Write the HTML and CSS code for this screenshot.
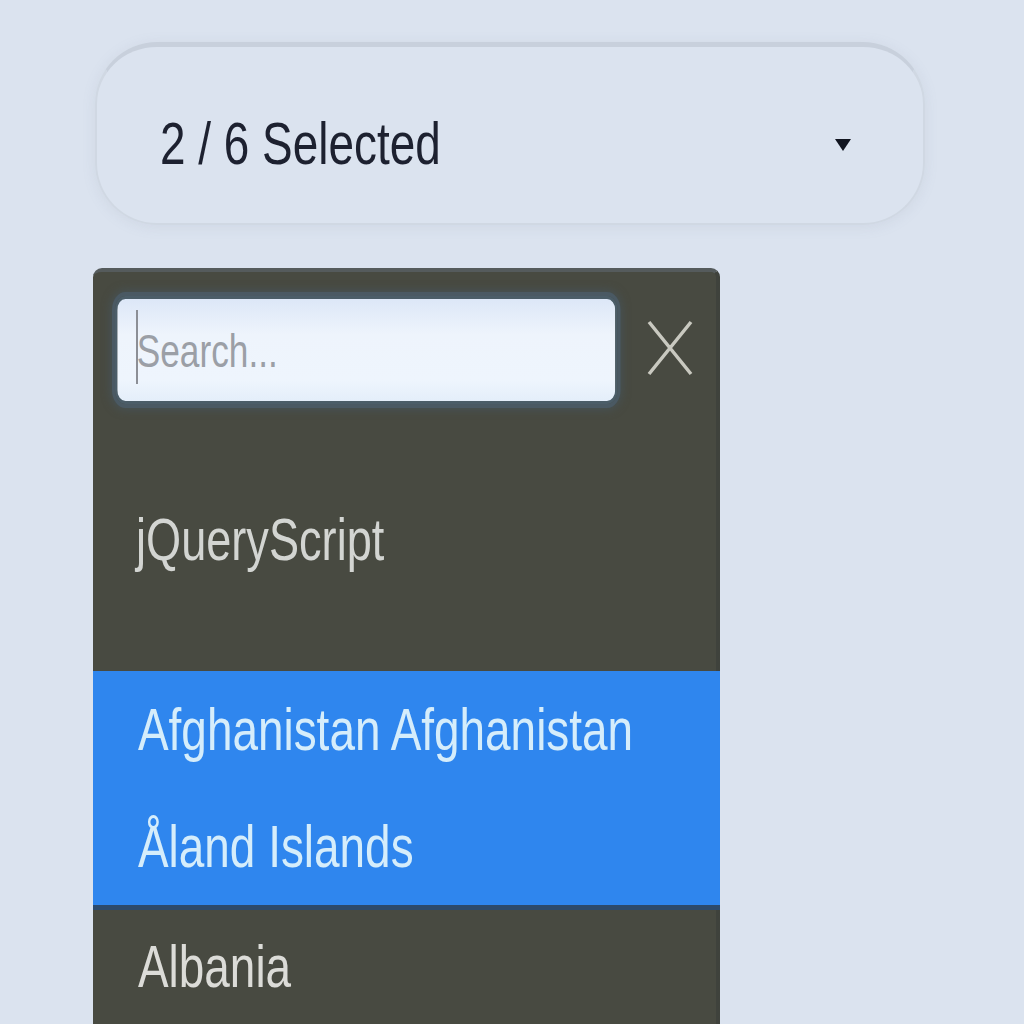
FILE: index.html
```html
<!DOCTYPE html>
<html lang="en">
<head>
<meta charset="utf-8">
<title>Multi Select</title>
<link rel="stylesheet" href="styles.css">
</head>
<body>
<div class="wrap">
  <div class="select">
    <span class="t sel-text">2 / 6 Selected</span>
    <span class="caret"></span>
  </div>
  <div class="panel">
    <div class="search-row">
      <label class="search">
        <input type="text" class="search-input" placeholder="Search...">
        <span class="cursor"></span>
      </label>
      <button class="close" aria-label="Close">
        <svg width="48" height="58" viewBox="0 0 48 58"><path d="M3 3 L45 55 M45 3 L3 55" stroke="#c9c9c0" stroke-width="3.5" fill="none"/></svg>
      </button>
    </div>
    <div class="group"><span class="t">jQueryScript</span></div>
    <div class="selected">
      <div class="option"><span class="t">Afghanistan Afghanistan</span></div>
      <div class="option"><span class="t">Åland Islands</span></div>
    </div>
    <div class="option plain"><span class="t">Albania</span></div>
  </div>
</div>
</body>
</html>
```

FILE: styles.css
```css
* { box-sizing: border-box; }
html, body { margin: 0; padding: 0; }
body {
  background: #dbe3ef;
  font-family: "Liberation Sans", Arial, sans-serif;
  height: 1024px;
  overflow: hidden;
}
.wrap {
  padding: 42px 0 0 95px;
}
.t {
  display: inline-block;
  transform: scaleX(0.765);
  transform-origin: left center;
  white-space: nowrap;
}
.select {
  width: 830px;
  height: 183px;
  border-radius: 62px;
  border: 2px solid #d0d8e3;
  border-top: 5px solid #c8d0dc;
  box-shadow: 0 2px 14px rgba(120, 135, 160, 0.12);
  display: flex;
  align-items: center;
  justify-content: space-between;
  padding: 16px 72px 0 63px;
}
.sel-text {
  font-size: 60px;
  color: #1d2130;
}
.caret {
  width: 0;
  height: 0;
  margin-top: 4px;
  border-left: 8px solid transparent;
  border-right: 8px solid transparent;
  border-top: 12px solid #111520;
}
.panel {
  margin-top: 43px;
  margin-left: -2px;
  width: 627px;
  background: #484a41;
  border-radius: 9px 9px 0 0;
  border-top: 4px solid #555b5c;
  border-right: 4px solid #3f423c;
  height: 800px;
}
.search-row {
  display: flex;
  align-items: center;
  padding: 24px 0 14px 22px;
  gap: 28px;
}
.search {
  position: relative;
  display: block;
  width: 503px;
  height: 108px;
}
.search-input {
  width: 670px;
  height: 100%;
  transform: scaleX(0.75);
  transform-origin: left center;
  border: 3px solid #4b5d68;
  border-radius: 14px;
  background: linear-gradient(#dce7f7, #eef4fc 35%, #eef5fd 80%, #e4eefa);
  box-shadow: 0 0 0 4px #4a5963, 0 0 10px 6px rgba(70, 88, 100, 0.55);
  font-family: inherit;
  font-size: 47px;
  padding: 0 0 0 26px;
  outline: none;
  color: #333;
}
.search-input::placeholder {
  color: #9b9fa6;
}
.cursor {
  position: absolute;
  left: 21px;
  top: 14px;
  width: 2px;
  height: 74px;
  background: #8c8f96;
}
.close {
  border: 0;
  background: none;
  padding: 0;
  margin-top: -4px;
  display: flex;
}
.group {
  height: 253px;
  display: flex;
  align-items: center;
  padding-left: 43px;
  font-size: 59px;
  color: #d3d5d2;
  padding-bottom: 10px;
}
.selected {
  background: #2f86ee;
  border-bottom: 5px solid #2d4a6b;
  margin-right: -4px;
}
.option {
  height: 117px;
  display: flex;
  align-items: center;
  padding-left: 45px;
  font-size: 60px;
  color: #d5edfb;
}
.option.plain {
  color: #dcdcd8;
  height: 112px;
}
```
